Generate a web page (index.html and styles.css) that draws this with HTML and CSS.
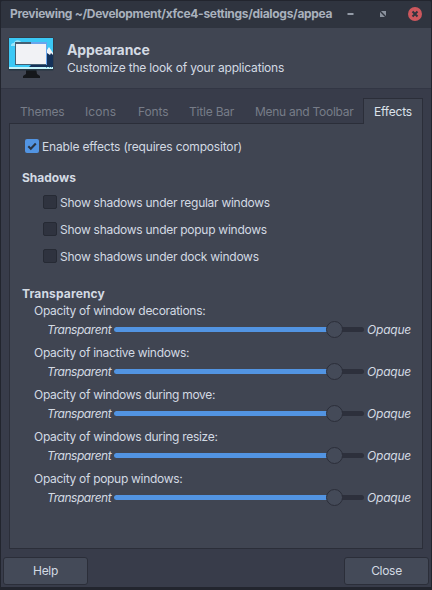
FILE: index.html
```html
<!DOCTYPE html>
<html lang="en">
<head>
<meta charset="utf-8">
<title>Appearance</title>
<link rel="stylesheet" href="styles.css">
</head>
<body>
<div class="window">
  <div class="titlebar">
    <div class="title"><span>Previewing ~/Development/xfce4-settings/dialogs/appea</span></div>
    <svg class="controls" width="92" height="27" viewBox="0 0 92 27">
      <path d="M8.500 12h6v2h-6z" fill="#949ba7"/>
      <path d="M42 10h5v5zM41 11v5h5z" fill="#8a919d"/>
      <circle cx="76" cy="13" r="7" fill="#cc575d"/>
      <path d="M73.500 10.500l5 5m0-5l-5 5" stroke="#2f343f" stroke-width="2"/>
    </svg>
  </div>
  <header class="header">
    <svg class="logo" width="46" height="42" viewBox="0 0 46 42">
      <path d="M18 31h10l1 6 3 2v2H15v-2l3-2z" fill="#15171b"/>
      <rect x=".5" y=".5" width="45" height="33" rx="1" fill="#263743"/>
      <path d="M1 1h44v29H1z" fill="#3bc8f5"/>
      <path d="M3 9c0-3 2-3 3-3 1-4 6-3 7-1l3 1v3z" fill="#9be6fa"/>
      <path d="M21 30l3-3 15-12 3-2 3 4v13z" fill="#15325a"/>
      <path d="M39 13l2-3 4 6v2l-2-2-1 2-3-2z" fill="#f0f5f9"/>
      <path d="M1 30h44v2H1z" fill="#c5f4fb"/>
      <path d="M38 30h1v1h-1zM41 30h1v1h-1zM43 30h1v1h-1z" fill="#5da9bd"/>
      <rect x="7" y="5" width="32" height="23" fill="#456074"/>
      <path d="M23 5h16v23h-1V8H23z" fill="#68a5ec"/>
      <path d="M8 7h30v20H8z" fill="#f1f2f5"/>
    </svg>
    <div><h1><span>Appearance</span></h1><p><span>Customize the look of your applications</span></p></div>
  </header>
  <nav class="tabs">
    <span class="tab themes">Themes</span><span class="tab icons">Icons</span><span class="tab fonts">Fonts</span><span class="tab titles">Title Bar</span><span class="tab menus">Menu and Toolbar</span><span class="tab active">Effects</span>
  </nav>
  <main class="panel">
    <label class="check"><i class="box on"><svg width="14" height="14" viewBox="0 0 14 14"><path d="M3.3 7.3l2.500 2.400 5-5.200" fill="none" stroke="#2b3442" stroke-width="2.1"/></svg></i><span>Enable effects (requires compositor)</span></label>
    <h2 class="shadows"><span>Shadows</span></h2>
    <div class="shadow-list">
      <label class="check"><i class="box"></i><span>Show shadows under regular windows</span></label>
      <label class="check"><i class="box"></i><span>Show shadows under popup windows</span></label>
      <label class="check"><i class="box"></i><span>Show shadows under dock windows</span></label>
    </div>
    <h2 class="transparency"><span>Transparency</span></h2>
    <div class="sliders">
      <div class="setting"><div class="name"><span>Opacity of window decorations:</span></div><div class="scale"><em class="low">Transparent</em><div class="track"><b class="fill"></b><b class="knob"></b></div><em class="high">Opaque</em></div></div>
      <div class="setting"><div class="name"><span>Opacity of inactive windows:</span></div><div class="scale"><em class="low">Transparent</em><div class="track"><b class="fill"></b><b class="knob"></b></div><em class="high">Opaque</em></div></div>
      <div class="setting"><div class="name"><span>Opacity of windows during move:</span></div><div class="scale"><em class="low">Transparent</em><div class="track"><b class="fill"></b><b class="knob"></b></div><em class="high">Opaque</em></div></div>
      <div class="setting"><div class="name"><span>Opacity of windows during resize:</span></div><div class="scale"><em class="low">Transparent</em><div class="track"><b class="fill"></b><b class="knob"></b></div><em class="high">Opaque</em></div></div>
      <div class="setting"><div class="name"><span>Opacity of popup windows:</span></div><div class="scale"><em class="low">Transparent</em><div class="track"><b class="fill"></b><b class="knob"></b></div><em class="high">Opaque</em></div></div>
    </div>
  </main>
  <footer class="actions"><button type="button">Help</button><button type="button">Close</button></footer>
</div>
</body>
</html>
```
FILE: styles.css
```css
* { box-sizing: border-box; }
html { background: #22252e; }
body { margin: 0; font: 12px/16px Inter, "Noto Sans", sans-serif; color: #d3dae3; }
h1, h2, p { margin: 0; }
.window { width: 432px; height: 590px; border: 1px solid #22252e; border-bottom-width: 3px; background: #383c4a; display: flex; flex-direction: column; border-radius: 3px 3px 0 0; overflow: hidden; white-space: nowrap; }
.titlebar { height: 27px; flex: none; background: #2f343f; display: flex; justify-content: space-between; padding-left: 9px; }
.title { font-weight: 700; line-height: 26px; color: #a9b1bd; letter-spacing: -.31px; width: 323px; }
.controls { flex: none; }
.header { height: 61px; flex: none; background: #404552; border-bottom: 1px solid #323644; display: flex; padding: 9px 0 0 7px; gap: 13px; }
.header h1 { font-size: 14px; line-height: 20px; margin-top: 3px; letter-spacing: -.1px; }
.header p { line-height: 16px; letter-spacing: -.18px; }
.tabs { height: 35px; flex: none; display: flex; align-items: flex-end; padding-left: 8px; margin-bottom: -1px; position: relative; z-index: 1; color: #777c88; }
.tab { height: 25px; line-height: 26px; padding-left: 11px; letter-spacing: -.2px; }
.themes { width: 65px; }
.icons { width: 53px; letter-spacing: .1px; }
.fonts { width: 51px; letter-spacing: -.1px; }
.titles { width: 66px; }
.menus { width: 119px; letter-spacing: -.27px; }
.active { width: 60px; height: 26px; line-height: 25px; padding-left: 10px; border: 1px solid #2b2e39; border-bottom: 0; background: #404552; color: #dce2ea; }
.panel { width: 414px; height: 426px; flex: none; margin-left: 8px; border: 1px solid #2b2e39; background: #404552; padding: 15px 11px 0 12px; }
.check { display: flex; height: 16px; gap: 3px; align-items: flex-start; letter-spacing: -.27px; }
.panel > .check { padding-left: 3px; letter-spacing: -.18px; }
.box { width: 14px; height: 14px; flex: none; background: #2f333f; border: 1px solid #262a34; border-radius: 2px; }
.box svg { display: block; }
.box.on { background: #5294e2; border: 0; }
h2 { font-size: 12px; line-height: 16px; }
.shadows { margin-top: 15px; }
.shadow-list { display: flex; flex-direction: column; gap: 11px; padding-left: 21px; margin-top: 9px; }
.transparency { margin-top: 21px; letter-spacing: .15px; }
.sliders { padding-left: 12px; margin-top: 1px; }
.setting { height: 42px; }
.name { letter-spacing: -.3px; }
.scale { display: flex; align-items: center; height: 19px; padding-left: 13px; margin-top: 1px; }
.low { width: 67px; flex: none; letter-spacing: -.45px; line-height: 18px; padding-top: 1px; }
.track { width: 250px; flex: none; height: 5px; border-radius: 3px; background: #2d303c; position: relative; }
.fill { display: block; width: 217px; height: 5px; border-radius: 3px 0 0 3px; background: #5294e2; }
.knob { position: absolute; left: 212px; top: -6px; width: 17px; height: 17px; border-radius: 50%; border: 1px solid #2b2e39; background: #444a58; }
.high { margin-left: 3px; letter-spacing: -.2px; line-height: 18px; padding-top: 1px; }
.actions { display: flex; justify-content: space-between; margin-top: 8px; padding: 0 2px; }
button { width: 85px; height: 28px; background: #444a58; border: 1px solid #2b2e39; border-radius: 3px; color: #d3dae3; font: inherit; letter-spacing: -.3px; padding: 0; }
```
